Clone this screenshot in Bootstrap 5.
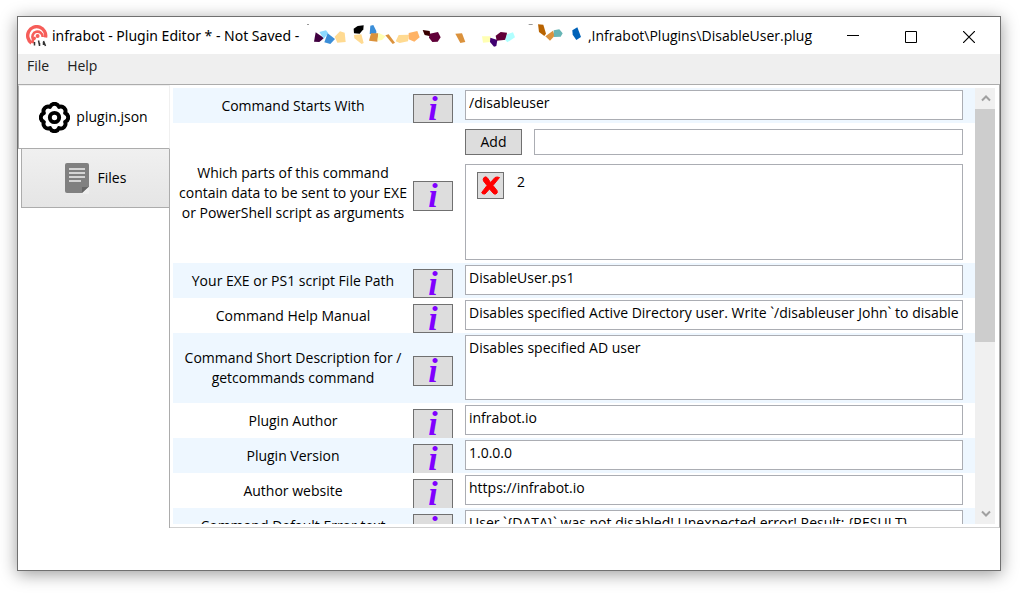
<!DOCTYPE html>
<html lang="en">
<head>
<meta charset="utf-8">
<meta name="viewport" content="width=device-width, initial-scale=1">
<title>infrabot - Plugin Editor</title>
<link href="https://cdn.jsdelivr.net/npm/bootstrap@5.3.0/dist/css/bootstrap.min.css" rel="stylesheet">
<style>
  body { font-family: "Open Sans", "Noto Sans", sans-serif; font-size: 14px; line-height: 20px; color: #000; background: #fff; padding: 16px 21px 22px 17px; }
  button { font: inherit; color: inherit; padding: 0; }
  .app-window { min-width: 0; border: 1px solid #707070; background: #fff; box-shadow: 0 3px 16px rgba(0,0,0,.4); }
  .title-bar { height: 37px; padding-right: 2px; }
  .title-lead { width: 255px; font-family: "Noto Sans", sans-serif; }
  .caption-btn { width: 58px; height: 37px; border: 0; background: transparent; }
  .menu-bar { height: 31px; gap: 18px; background: #efefef; border-bottom: 1px solid #acacac; padding: 2px 0 6px 9px; }
  .menu-bar a { color: #212121; text-decoration: none; }
  .main-area { min-height: 0; }
  .side-tabs { width: 152px; }
  .side-tabs::after { content: ""; flex: 1; border-right: 1px solid #acacac; }
  .side-tab { border: 1px solid #acacac; }
  .tab-active { height: 64px; background: #fff; border-color: #f0f0f0; border-bottom-color: #acacac; border-left-color: #acacac; gap: 6px; padding-right: 1px; }
  .tab-idle { height: 59px; margin-left: 3px; border-top: 0; background: linear-gradient(#f0f0f0, #e5e5e5); gap: 9px; }
  .pane { min-width: 0; border-right: 1px solid #acacac; border-bottom: 1px solid #d0d0d0; padding: 3px; }
  .form-list { min-width: 0; }
  .form-line:nth-child(odd) { background: #eef7ff; }
  .label-cell { width: 240px; }
  .info-cell { width: 40px; padding-top: 6px; }
  .info-btn { height: 30px; min-height: 0; background: #ddd; border: 1px solid #707070; color: #8000ff; font: italic bold 34px/28px "Liberation Serif", serif; }
  .info-open { border-bottom: 0; }
  .field-cell { padding: 2px 12px 3px; }
  .line-1 { height: 35px; }
  .line-2 { height: 140px; }
  .line-5 { height: 70px; }
  .box { border: 1px solid #abadb3; border-radius: 0; background: #fff; color: #000; width: 100%; padding: 0 0 6px 3px; outline: 0; resize: none; display: block; }
  .box-line { height: 30px; }
  .box-area { height: 65px; padding-top: 2px; overflow: hidden; }
  .box-add { height: 26px; }
  .box-list { height: 96px; padding: 7px 11px; gap: 13px; }
  .gray-btn { background: #ddd; border: 1px solid #707070; }
  .add-btn { width: 57px; height: 26px; }
  .del-btn { width: 27px; height: 27px; }
  .args-cell { padding: 6px 12px 3px; gap: 9px; }
  .args-top { gap: 12px; }
  .scroll-track { width: 20px; background: #f0f0f0; margin-right: 1px; }
  .scroll-btn { height: 21px; padding-left: 2px; border: 0; background: transparent; }
  .scroll-thumb { height: 233px; background: #cdcdcd; }
  .bottom-strip { height: 42px; }
</style>
</head>
<body class="vh-100 d-flex overflow-hidden">
<div class="app-window d-flex flex-column flex-fill">
  <header class="title-bar d-flex align-items-center flex-shrink-0">
    <svg class="ms-2 flex-shrink-0" width="22" height="22" viewBox="0 0 22 22" fill="none" aria-hidden="true">
      <path d="M5.500 18A9 9 0 1 1 19.500 12.500" stroke="#f65d59" stroke-width="3.400"/>
      <path d="M7 14.500A5.200 5.200 0 1 1 16.700 12" stroke="#f65d59" stroke-width="2.600"/>
      <path d="M9 12L6 18" stroke="#f65d59" stroke-width="3"/>
      <circle cx="11.600" cy="11" r="2" fill="#f65d59"/>
      <path d="M10 15l1 6M14 14l1 6M18 15l1 6" stroke="#fff" stroke-width="4"/>
      <path d="M8.500 17v3.500M12.500 15.500l1 4.500M13.500 18v3M17.500 16l2 5M17.500 17v3" stroke="#333" stroke-width="1.500"/>
    </svg>
    <span class="title-lead ms-1 flex-shrink-0 text-nowrap">infrabot - Plugin Editor * - Not Saved -</span>
    <svg class="flex-shrink-0" width="281" height="37" viewBox="21 6 843 111" aria-hidden="true">
      <path fill="#999" d="M21 27h6v3h-6zM686 27h12v3h-12z"/>
      <path fill="#400040" d="M47 52L72 69 58 81 42 80z"/><path fill="#8cd9ff" d="M58 51L78 46 85 55 71 71z"/>
      <path fill="#3b8ed8" d="M83 55L105 72 91 87 73 82z"/><path fill="#ffda91" d="M104 65L120 49 134 53 137 81 112 83z"/>
      <path fill="#000" d="M161 41L173 33 191 31 190 43 179 56 162 55z"/><path fill="#ffda91" d="M162 60L184 58 191 84 185 87 163 70z"/>
      <path fill="#3b8ed8" d="M211 32L220 30 229 48 229 56 209 57z"/><path fill="#db923c" d="M213 55L235 55 232 80 207 77z"/>
      <path fill="#ffffb3" d="M235 53L257 64 246 75 233 77z"/><path fill="#db923c" d="M256 61L266 58 285 83 278 87z"/>
      <path fill="#ffda91" d="M296 60L327 59 324 79 299 84 287 79z"/><path fill="#ffb366" d="M326 54L352 48 359 67 343 80 326 73z"/>
      <path fill="#380000" d="M368 45L389 48 391 64 374 60z"/><path fill="#600038" d="M389 56L414 51 422 67 413 80 397 81 387 68z"/>
      <path fill="#db923c" d="M466 56L486 55 496 81 481 84z"/>
      <path fill="#ffffb3" d="M546 64L572 64 571 81 549 83z"/><path fill="#400070" d="M571 68L592 75 589 93 582 95 570 81z"/>
      <path fill="#600038" d="M587 62L602 51 621 53 618 74 590 77z"/><path fill="#b0ffff" d="M621 58L639 52 645 67 622 82 615 74z"/>
      <path fill="#b86300" d="M714 28L730 29 738 56 733 63 717 51z"/><path fill="#db923c" d="M736 64L759 47 764 62 750 77z"/>
      <path fill="#66b5b5" d="M761 46L778 43 788 55 782 65 762 66z"/><path fill="#0062b8" d="M817 46L832 37 843 66 829 75 818 59z"/>
    </svg>
    <span class="text-nowrap flex-fill">,Infrabot\Plugins\DisableUser.plug</span>
    <button class="caption-btn" aria-label="Minimize"><svg width="12" height="12" viewBox="0 0 12 12"><path d="M0 4.500h12" stroke="#000"/></svg></button>
    <button class="caption-btn" aria-label="Maximize"><svg width="12" height="12" viewBox="0 0 12 12"><path d="M.5.5h11v11H.5z" fill="none" stroke="#000"/></svg></button>
    <button class="caption-btn" aria-label="Close"><svg width="12" height="12" viewBox="0 0 12 12"><path d="M0 0l12 12M12 0L0 12" stroke="#000" stroke-width="1.200"/></svg></button>
  </header>
  <nav class="menu-bar d-flex flex-shrink-0"><a href="#">File</a><a href="#">Help</a></nav>

  <main class="main-area d-flex flex-fill">
    <div class="side-tabs d-flex flex-column flex-shrink-0">
      <button class="side-tab tab-active d-flex align-items-center justify-content-center">
        <svg width="31" height="31" viewBox="0 0 30 30" fill="none" stroke="#000" stroke-width="3.800" aria-hidden="true">
          <path stroke-linejoin="round" d="M25.300 10.700A4.600 4.600 0 0 1 25.300 19.300 4.600 4.600 0 0 1 19.300 25.300 4.600 4.600 0 0 1 10.700 25.300 4.600 4.600 0 0 1 4.700 19.300 4.600 4.600 0 0 1 4.700 10.700 4.600 4.600 0 0 1 10.700 4.700 4.600 4.600 0 0 1 19.300 4.700 4.600 4.600 0 0 1 25.300 10.700Z"/>
          <circle cx="15" cy="15" r="4.500"/>
        </svg>
        <span>plugin.json</span>
      </button>
      <button class="side-tab tab-idle d-flex align-items-center justify-content-center">
        <svg width="24" height="32" viewBox="0 0 24 32" aria-hidden="true">
          <path fill="#808080" d="M2 1h20a2 2 0 0 1 2 2v22l-7 6H2a2 2 0 0 1-2-2V3a2 2 0 0 1 2-2z"/>
          <path fill="#eee" d="M24 25v7h-9l2-1z"/><path fill="#666" d="M17 25h6l-6 6z"/>
          <path d="M4 7h16M4 11h16M4 15h16M4 19h12" stroke="#f0f0f0" stroke-width="1.500"/>
        </svg>
        <span>Files</span>
      </button>
    </div>

    <section class="pane d-flex flex-fill">
      <form class="form-list flex-fill overflow-hidden">
        <div class="form-line line-1 d-flex">
          <label for="cmd" class="label-cell d-flex align-items-center justify-content-center text-center">Command Starts With</label>
          <div class="info-cell d-flex flex-column justify-content-center"><button type="button" class="info-btn">i</button></div>
          <div class="field-cell flex-fill"><input id="cmd" class="box box-line" value="/disableuser"></div>
        </div>
        <div class="form-line line-2 d-flex">
          <label for="arg" class="label-cell d-flex align-items-center justify-content-center text-center">Which parts of this command<br>contain data to be sent to your EXE<br>or PowerShell script as arguments</label>
          <div class="info-cell d-flex flex-column justify-content-center"><button type="button" class="info-btn">i</button></div>
          <div class="args-cell flex-fill d-flex flex-column">
            <div class="args-top d-flex"><button type="button" class="gray-btn add-btn flex-shrink-0">Add</button><input id="arg" class="box box-add"></div>
            <div class="box box-list d-flex align-items-start">
              <button type="button" class="gray-btn del-btn d-flex align-items-center justify-content-center" aria-label="Remove">
                <svg width="19" height="19" viewBox="0 0 19 19" aria-hidden="true"><path fill="#f00" stroke="#f00" stroke-linejoin="round" d="M3 1.500Q5 0 6.500 2L9.500 6.500 14 1.500Q16 .5 18.500 1.500L12 9.500 16 14.500Q17 17 15 18 13 18.500 12 17L8.500 13 4 18Q1 18.500.7 16.500L6 9.500 2.500 5Q1.500 3 3 1.500z"/></svg>
              </button>
              <span>2</span>
            </div>
          </div>
        </div>
        <div class="form-line line-1 d-flex">
          <label for="path" class="label-cell d-flex align-items-center justify-content-center text-center">Your EXE or PS1 script File Path</label>
          <div class="info-cell d-flex flex-column justify-content-center"><button type="button" class="info-btn">i</button></div>
          <div class="field-cell flex-fill"><input id="path" class="box box-line" value="DisableUser.ps1"></div>
        </div>
        <div class="form-line line-1 d-flex">
          <label for="manual" class="label-cell d-flex align-items-center justify-content-center text-center">Command Help Manual</label>
          <div class="info-cell d-flex flex-column justify-content-center"><button type="button" class="info-btn">i</button></div>
          <div class="field-cell flex-fill"><input id="manual" class="box box-line" value="Disables specified Active Directory user. Write `/disableuser John` to disable user"></div>
        </div>
        <div class="form-line line-5 d-flex">
          <label for="short" class="label-cell d-flex align-items-center justify-content-center text-center">Command Short Description for /<br>getcommands command</label>
          <div class="info-cell d-flex flex-column justify-content-center"><button type="button" class="info-btn">i</button></div>
          <div class="field-cell flex-fill"><textarea id="short" class="box box-area">Disables specified AD user</textarea></div>
        </div>
        <div class="form-line line-1 d-flex">
          <label for="author" class="label-cell d-flex align-items-center justify-content-center text-center">Plugin Author</label>
          <div class="info-cell d-flex flex-column justify-content-center"><button type="button" class="info-btn info-open">i</button></div>
          <div class="field-cell flex-fill"><input id="author" class="box box-line" value="infrabot.io"></div>
        </div>
        <div class="form-line line-1 d-flex">
          <label for="version" class="label-cell d-flex align-items-center justify-content-center text-center">Plugin Version</label>
          <div class="info-cell d-flex flex-column justify-content-center"><button type="button" class="info-btn info-open">i</button></div>
          <div class="field-cell flex-fill"><input id="version" class="box box-line" value="1.0.0.0"></div>
        </div>
        <div class="form-line line-1 d-flex">
          <label for="site" class="label-cell d-flex align-items-center justify-content-center text-center">Author website</label>
          <div class="info-cell d-flex flex-column justify-content-center"><button type="button" class="info-btn info-open">i</button></div>
          <div class="field-cell flex-fill"><input id="site" class="box box-line" value="https://infrabot.io"></div>
        </div>
        <div class="form-line line-1 d-flex">
          <label for="err" class="label-cell d-flex align-items-center justify-content-center text-center">Command Default Error text</label>
          <div class="info-cell d-flex flex-column justify-content-center"><button type="button" class="info-btn info-open">i</button></div>
          <div class="field-cell flex-fill"><input id="err" class="box box-line" value="User `{DATA}` was not disabled! Unexpected error! Result: {RESULT}"></div>
        </div>
      </form>
      <div class="scroll-track d-flex flex-column flex-shrink-0">
        <button class="scroll-btn d-flex align-items-center justify-content-center" aria-label="Scroll up"><svg width="10" height="7" viewBox="0 0 10 7"><path d="M1 5.500l4-4 4 4" fill="none" stroke="#a0a0a0" stroke-width="2"/></svg></button>
        <div class="scroll-thumb"></div>
        <button class="scroll-btn d-flex align-items-center justify-content-center mt-auto" aria-label="Scroll down"><svg width="10" height="7" viewBox="0 0 10 7"><path d="M1 1.500l4 4 4-4" fill="none" stroke="#a0a0a0" stroke-width="2"/></svg></button>
      </div>
    </section>
  </main>
  <footer class="bottom-strip flex-shrink-0"></footer>
</div>
<script src="https://cdn.jsdelivr.net/npm/bootstrap@5.3.0/dist/js/bootstrap.bundle.min.js"></script>
</body>
</html>
